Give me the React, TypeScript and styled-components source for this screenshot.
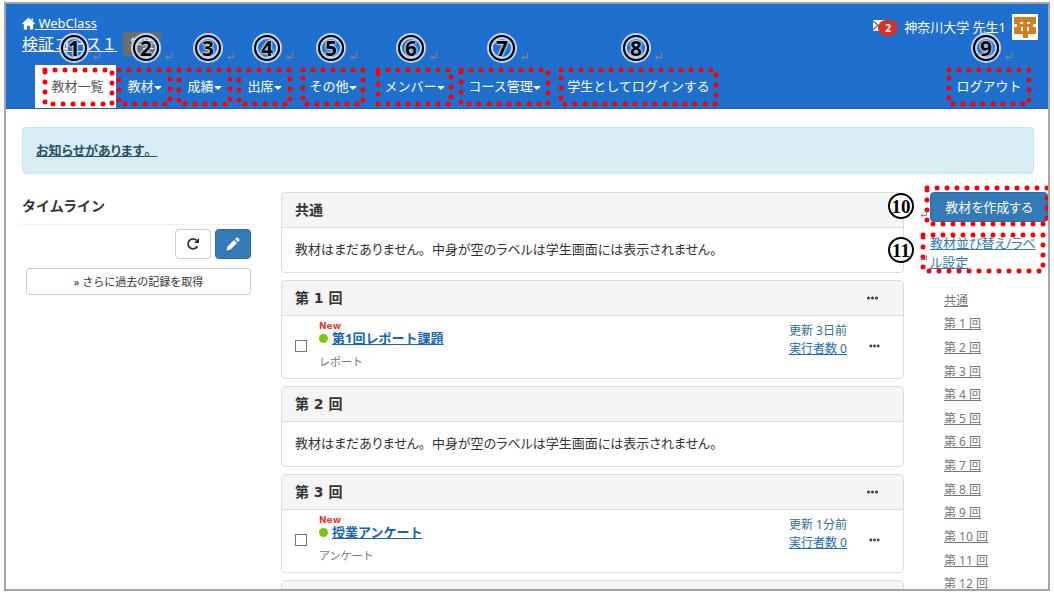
import React from "react";
import styled, { createGlobalStyle } from "styled-components";

const Global = createGlobalStyle`
  *, *::before, *::after { box-sizing: border-box; }
  body {
    margin: 0;
    background: #fff;
    color: #333;
    font: 12px/18px "Noto Sans", "Noto Sans CJK JP", sans-serif;
  }
  h1, h2, p, ul { margin: 0; padding: 0; font-size: inherit; }
  ul { list-style: none; }
  button { font: inherit; cursor: pointer; }
`;

const Frame = styled.div`
  height: calc(100vh - 5px);
  margin: 2px 4px 3px;
  border: 2px solid #a5a5a5;
  overflow: hidden;
`;

const Header = styled.header`
  height: 105px;
  padding: 10px 10px 0 16px;
  background: #1f6fce;
  border-bottom: 1px solid #1a62b8;
  color: #fff;
  display: flex;
  flex-direction: column;
  justify-content: space-between;
`;

const HeaderTop = styled.div`
  display: flex;
  justify-content: space-between;
  align-items: flex-start;
`;

const Brand = styled.div`
  display: flex;
  flex-direction: column;
`;

const HomeLink = styled.a`
  display: flex;
  align-items: center;
  color: #fff;
  font-size: 13px;
  line-height: 18px;
`;

const CourseRow = styled.div`
  display: flex;
  align-items: center;
  gap: 6px;
`;

const CourseLink = styled.a`
  color: #fff;
  font-size: 16px;
  line-height: 24px;
`;

const CourseButton = styled.button`
  width: 38px;
  height: 24px;
  padding: 0;
  border: 0;
  border-radius: 3px;
  background: #6c6c6c;
  color: #fff;
`;

const Account = styled.div`
  display: flex;
  align-items: center;
  font-size: 13px;
`;

const Mail = styled.a`
  position: relative;
  width: 31px;
  height: 20px;
  color: #fff;
`;

const MailCount = styled.span`
  position: absolute;
  left: 5px;
  top: 3px;
  width: 20px;
  height: 16px;
  border-radius: 8px;
  background: #d93025;
  font-size: 10px;
  font-weight: 700;
  line-height: 16px;
  text-align: center;
`;

const Avatar = styled.svg`
  margin-left: 6px;
`;

const Nav = styled.nav`
  display: flex;
  justify-content: space-between;
  height: 43px;
  padding: 0 6px 0 13px;
`;

const NavGroup = styled.div`
  display: flex;
`;

const NavItem = styled.div<{ $width: number; $gap?: number; $active?: boolean }>`
  position: relative;
  width: ${(p) => p.$width}px;
  margin-right: ${(p) => p.$gap ?? 0}px;
  background: ${(p) => (p.$active ? "#fff" : "transparent")};
`;

const NavButton = styled.button<{ $active?: boolean }>`
  width: 100%;
  height: 42px;
  padding: ${(p) => (p.$active ? "0 0 0 4px" : "0")};
  border: 0;
  background: transparent;
  color: ${(p) => (p.$active ? "#555" : "#fff")};
  font-size: 13px;
  white-space: nowrap;
  display: flex;
  align-items: center;
  justify-content: center;
`;

const Caret = styled.span`
  border: 4px solid transparent;
  border-top-color: currentColor;
  border-bottom: 0;
  margin-top: 4px;
`;

const OutlineBox = styled.span<{ $inset: string }>`
  position: absolute;
  inset: ${(p) => p.$inset};
  pointer-events: none;

  svg {
    display: block;
    width: 100%;
    height: 100%;
    overflow: visible;
  }
`;

const MarkerBox = styled.span<{ $left: number; $top: number }>`
  position: absolute;
  left: ${(p) => p.$left}px;
  top: ${(p) => p.$top}px;
  display: flex;
  align-items: flex-end;
  gap: 6px;
  pointer-events: none;
`;

const Ring = styled.span<{ $halo?: boolean; $narrow?: boolean }>`
  width: 26px;
  height: 26px;
  border: 2px solid #000;
  border-radius: 50%;
  box-shadow: ${(p) => (p.$halo ? "0 0 0 2px #bdd7f2, inset 0 0 0 2px #bdd7f2" : "none")};
  background: ${(p) => (p.$halo ? "transparent" : "#fff")};
  color: #000;
  font: ${(p) => (p.$narrow ? '700 19px/21px "Liberation Serif", serif' : '700 21px/20px "Noto Sans", sans-serif')};
  text-shadow: ${(p) =>
    p.$halo ? "1px 0 1px #bdd7f2, -1px 0 1px #bdd7f2, 0 1px 1px #bdd7f2, 0 -1px 1px #bdd7f2, 0 0 3px #bdd7f2" : "none"};
  display: flex;
  align-items: center;
  justify-content: center;
`;

const Content = styled.main`
  padding: 18px 0 0 16px;
`;

const Alert = styled.div`
  margin-right: 14px;
  padding: 13px 13px 14px;
  border: 1px solid #bce8f1;
  border-radius: 4px;
  background: #d9edf7;
`;

const AlertLink = styled.a`
  display: table;
  height: 18px;
  color: #245269;
  font-size: 13px;
  font-weight: 700;
  font-feature-settings: "palt";
`;

const FullWidth = styled.span`
  font-feature-settings: normal;
`;

const Columns = styled.div`
  display: grid;
  grid-template-columns: 233px minmax(0, 1fr) 118px;
  column-gap: 26px;
  padding-top: 18px;
`;

const TimelineTitle = styled.h1`
  padding: 3px 0 7px;
  border-bottom: 1px solid #eee;
  font-size: 14px;
  line-height: 22px;
`;

const TimelineTools = styled.div`
  display: flex;
  flex-wrap: wrap;
  justify-content: flex-end;
  gap: 9px 4px;
  padding: 4px 4px 0;
`;

const ToolButton = styled.button<{ $primary?: boolean }>`
  width: 36px;
  height: 30px;
  padding: 0;
  display: flex;
  align-items: center;
  justify-content: center;
  border: 1px solid ${(p) => (p.$primary ? "#2e6da4" : "#ccc")};
  border-radius: 4px;
  background: ${(p) => (p.$primary ? "#337ab7" : "#fff")};
  color: ${(p) => (p.$primary ? "#fff" : "#333")};
`;

const HistoryButton = styled.button`
  width: 100%;
  height: 27px;
  padding: 0;
  border: 1px solid #ccc;
  border-radius: 3px;
  background: #fff;
  color: #333;
  font-size: 11px;
`;

const Panels = styled.div`
  display: flex;
  flex-direction: column;
  gap: 7px;
`;

const Panel = styled.section`
  border: 1px solid #ddd;
  border-radius: 4px;
  overflow: hidden;
`;

const PanelHead = styled.div`
  display: flex;
  justify-content: space-between;
  align-items: center;
  height: 35px;
  padding: 0 24px 1px 13px;
  border-bottom: 1px solid #ddd;
  background: #f5f5f5;
`;

const PanelTitle = styled.h2`
  font: 700 14px/20px "DejaVu Sans", "Noto Sans CJK JP", sans-serif;
`;

const MoreButton = styled.button`
  padding: 0;
  border: 0;
  background: transparent;
  color: #444;
  display: flex;
`;

const EmptyText = styled.p`
  padding: 12px 13px 14px;
  font-size: 13px;
  font-feature-settings: "palt";
`;

const Item = styled.div`
  display: flex;
  align-items: center;
  height: 62px;
  padding: 0 23px 2px 13px;
`;

const Check = styled.input`
  appearance: none;
  width: 12px;
  height: 12px;
  margin: 0 12px 0 0;
  border: 1px solid #777;
  background: #fff;
`;

const ItemBody = styled.div`
  flex: 1;
`;

const NewTag = styled.div`
  color: #f0382b;
  font: 700 9px/10px "DejaVu Sans", sans-serif;
`;

const ItemLine = styled.div`
  display: flex;
  align-items: center;
  gap: 4px;
  line-height: 14px;
`;

const Dot = styled.span`
  width: 9px;
  height: 9px;
  border-radius: 50%;
  background: #7cc410;
`;

const ItemLink = styled.a`
  color: #1464b8;
  font-size: 13px;
  font-weight: 700;
`;

const ItemKind = styled.div`
  padding-top: 8px;
  color: #777;
  font-size: 11px;
`;

const ItemInfo = styled.div`
  padding-bottom: 12px;
  margin-right: 22px;
  color: #31708f;
`;

const InfoLink = styled.a`
  display: block;
  color: #1a6bc0;
`;

const Side = styled.aside`
  display: flex;
  flex-direction: column;
`;

const CreateBox = styled.div`
  position: relative;
`;

const CreateButton = styled.button`
  width: 100%;
  height: 30px;
  padding: 0;
  border: 1px solid #2e6da4;
  border-radius: 4px;
  background: #337ab7;
  color: #fff;
  font-size: 13px;
  font-feature-settings: "palt";
`;

const SortBox = styled.div`
  position: relative;
  margin-top: 12px;
  padding-right: 8px;
`;

const SortLink = styled.a`
  color: #337ab7;
  font-size: 13px;
  font-feature-settings: "palt";
`;

const Sections = styled.ul`
  display: grid;
  grid-auto-rows: 1fr;
  align-items: center;
  height: 307px;
  margin-top: 17px;
  padding-left: 14px;
`;

const SectionLink = styled.a`
  color: #777;
`;

function Outline({ inset }: { inset: string }) {
  return (
    <OutlineBox $inset={inset}>
      <svg>
        <rect
          width="100%"
          height="100%"
          fill="none"
          stroke="#f00"
          strokeWidth="5"
          strokeLinecap="round"
          strokeDasharray="0 10"
        />
      </svg>
    </OutlineBox>
  );
}

function Marker({ n, left, top, halo }: { n: number; left: number; top: number; halo?: boolean }) {
  return (
    <MarkerBox $left={left} $top={top}>
      <Ring $halo={halo} $narrow={n > 9}>{n}</Ring>
      <svg width="7" height="8" viewBox="0 0 7 8" fill="none" stroke="#8a8a8a">
        <path d="M6.500 0v4.500H1M3 2.500l-2 2 2 2" />
      </svg>
    </MarkerBox>
  );
}

function Ellipsis({ size }: { size: number }) {
  return (
    <svg width={size} height="4" viewBox="0 0 12 4" fill="currentColor">
      <circle cx="2" cy="2" r="1.600" />
      <circle cx="6" cy="2" r="1.600" />
      <circle cx="10" cy="2" r="1.600" />
    </svg>
  );
}

const navItems = [
  { label: "教材一覧", width: 81, gap: 0, at: 26, inset: "5px 4px 4px 10px", caret: false },
  { label: "教材", width: 57, gap: 3, at: 17, caret: true },
  { label: "成績", width: 57, gap: 3, at: 19, caret: true },
  { label: "出席", width: 57, gap: 7, at: 18, caret: true },
  { label: "その他", width: 66, gap: 9, at: 18, caret: true },
  { label: "メンバー", width: 79, gap: 4, at: 23, caret: true },
  { label: "コース管理", width: 93, gap: 7, at: 31, caret: true },
  { label: "学生としてログインする", width: 161, gap: 0, at: 65, caret: false },
];
const itemInset = "5px 3px 4px 3px";

type Task = { title: string; kind: string; updated: string };
const panels: { title: string; task?: Task }[] = [
  { title: "共通" },
  { title: "第 1 回", task: { title: "第1回レポート課題", kind: "レポート", updated: "更新 3日前" } },
  { title: "第 2 回" },
  { title: "第 3 回", task: { title: "授業アンケート", kind: "アンケート", updated: "更新 1分前" } },
  { title: "第 4 回" },
];

const sections = ["共通", ...Array.from({ length: 12 }, (_, i) => `第 ${i + 1} 回`)];

export default function App() {
  return (
    <>
      <Global />
      <Frame>
        <Header>
          <HeaderTop>
            <Brand>
              <HomeLink href="#">
                <svg width="13" height="13" viewBox="0 0 14 13" fill="#fff">
                  <path d="M7 0l7 6.500-1 1-1-.8V13H8.500V9h-3v4H2V6.700l-1 .8-1-1zM10 1h2v3l-2-2z" />
                </svg>
                &nbsp;WebClass
              </HomeLink>
              <CourseRow>
                <CourseLink href="#">検証コース１</CourseLink>
                <CourseButton>学生</CourseButton>
              </CourseRow>
            </Brand>
            <Account>
              <Mail href="#" aria-label="メッセージ">
                <svg width="14" height="11" viewBox="0 0 14 11">
                  <path d="M0 0h14v11H0z" fill="#fff" />
                  <path d="M0 1l7 6 7-6M0 10l5-5M14 10L9 5" fill="none" stroke="#1f6fce" strokeWidth="1.200" />
                </svg>
                <MailCount>2</MailCount>
              </Mail>
              神奈川大学 先生1
              <Avatar width="26" height="26" viewBox="0 0 26 26">
                <path d="M0 0h26v26H0z" fill="#fff" />
                <path
                  d="M2 3h22v7h-3v3h3v7h-8v4h-5v-4H2v-7h3v-3H2z"
                  fill="#d08020"
                />
                <path d="M8 8h3v2H8zM15 8h3v2h-3zM9 13h2v4H9zM15 13h2v4h-2z" fill="#fff" />
              </Avatar>
            </Account>
          </HeaderTop>
          <Nav>
            <NavGroup>
              {navItems.map((item, i) => (
                <NavItem key={item.label} $width={item.width} $gap={item.gap} $active={i === 0}>
                  <NavButton $active={i === 0}>
                    {item.label}
                    {item.caret && <Caret />}
                  </NavButton>
                  <Outline inset={item.inset ?? itemInset} />
                  <Marker n={i + 1} left={item.at} top={-30} halo />
                </NavItem>
              ))}
            </NavGroup>
            <NavItem $width={86}>
              <NavButton>ログアウト</NavButton>
              <Outline inset={itemInset} />
              <Marker n={9} left={27} top={-30} halo />
            </NavItem>
          </Nav>
        </Header>
        <Content>
          <Alert>
            <AlertLink href="#">
              お知らせがあります<FullWidth>。</FullWidth>
            </AlertLink>
          </Alert>
          <Columns>
            <div>
              <TimelineTitle>タイムライン</TimelineTitle>
              <TimelineTools>
                <ToolButton aria-label="更新">
                  <svg width="14" height="14" viewBox="0 0 14 14">
                    <path d="M11.500 9.200A5 5 0 1 1 10.800 3.500" fill="none" stroke="currentColor" strokeWidth="1.800" />
                    <path d="M13 1v5H8z" fill="currentColor" />
                  </svg>
                </ToolButton>
                <ToolButton $primary aria-label="編集">
                  <svg width="14" height="14" viewBox="0 0 14 14" fill="currentColor">
                    <path d="M0.500 13.500l1-4L8 3l3 3-6.500 6.500zM9 2l1.200-1.200q.8-.8 1.600 0l1.400 1.400q.8.8 0 1.600L12 5z" />
                  </svg>
                </ToolButton>
                <HistoryButton>» さらに過去の記録を取得</HistoryButton>
              </TimelineTools>
            </div>
            <Panels>
              {panels.map(({ title, task }) => (
                <Panel key={title}>
                  <PanelHead>
                    <PanelTitle>{title}</PanelTitle>
                    {task && (
                      <MoreButton aria-label="メニュー">
                        <Ellipsis size={13} />
                      </MoreButton>
                    )}
                  </PanelHead>
                  {task ? (
                    <Item>
                      <Check type="checkbox" aria-label={task.title} />
                      <ItemBody>
                        <NewTag>New</NewTag>
                        <ItemLine>
                          <Dot />
                          <ItemLink href="#">{task.title}</ItemLink>
                        </ItemLine>
                        <ItemKind>{task.kind}</ItemKind>
                      </ItemBody>
                      <ItemInfo>
                        {task.updated}
                        <InfoLink href="#">実行者数 0</InfoLink>
                      </ItemInfo>
                      <MoreButton aria-label="メニュー">
                        <Ellipsis size={11} />
                      </MoreButton>
                    </Item>
                  ) : (
                    <EmptyText>
                      教材はまだありません<FullWidth>。</FullWidth>
                      中身が空のラベルは学生画面には表示されません<FullWidth>。</FullWidth>
                    </EmptyText>
                  )}
                </Panel>
              ))}
            </Panels>
            <Side>
              <CreateBox>
                <CreateButton>教材を作成する</CreateButton>
                <Outline inset="-4px 1px -2px -3px" />
                <Marker n={10} left={-42} top={1} />
              </CreateBox>
              <SortBox>
                <SortLink href="#">教材並び替え/ラベル設定</SortLink>
                <Outline inset="1px 5px 1px -7px" />
                <Marker n={11} left={-42} top={3} />
              </SortBox>
              <Sections>
                {sections.map((s) => (
                  <li key={s}>
                    <SectionLink href="#">{s}</SectionLink>
                  </li>
                ))}
              </Sections>
            </Side>
          </Columns>
        </Content>
      </Frame>
    </>
  );
}
